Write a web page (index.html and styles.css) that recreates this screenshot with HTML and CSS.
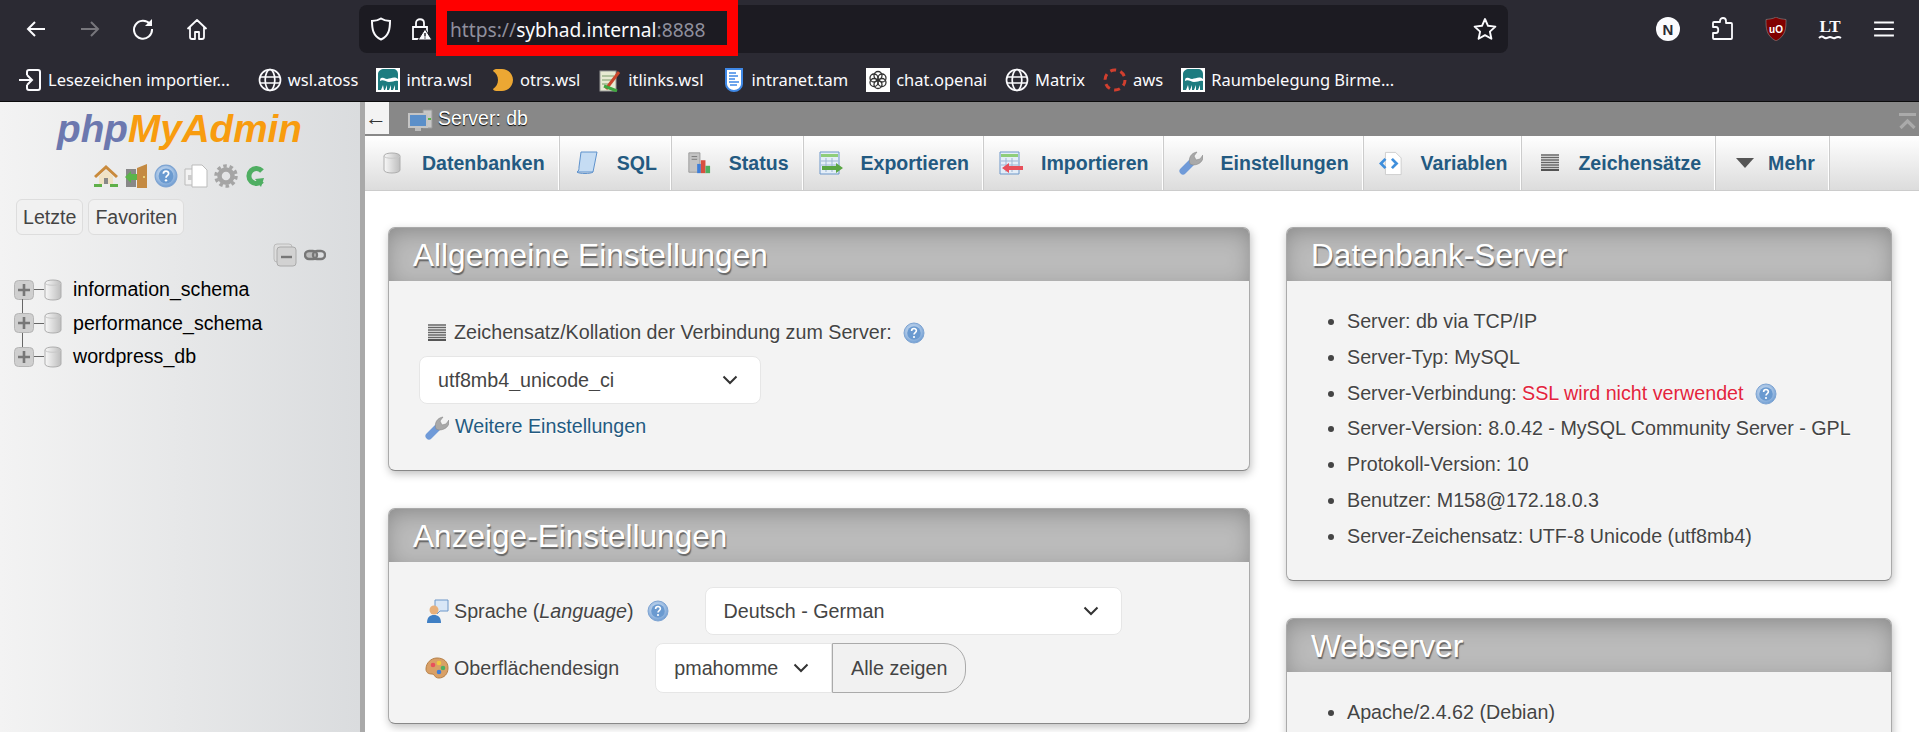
FILE: index.html
```html
<!DOCTYPE html>
<html lang="de">
<head>
    <meta charset="UTF-8">
    <title>sybhad.internal:8888 / db | phpMyAdmin</title>
    <link rel="stylesheet" href="styles.css">
</head>
<body>
<svg class="defs" width="0" height="0">
    <defs>
        <linearGradient id="g-db" x1="0" x2="1" y1="0" y2="0"><stop offset="0" stop-color="#f8f8f8"/><stop offset="1" stop-color="#bdbdbd"/></linearGradient>
        <radialGradient id="g-help" cx=".45" cy=".4" r=".6"><stop offset="0" stop-color="#d5e3f3"/><stop offset=".6" stop-color="#a5c2e4"/><stop offset="1" stop-color="#6f9dd2"/></radialGradient>
        <symbol id="i-db" viewBox="0 0 18 24">
            <path d="M1 5c0-4 16-4 16 0v14c0 4-16 4-16 0z" fill="url(#g-db)" stroke="#aeaeae"/>
            <path d="M1 5c0 3 16 3 16 0" fill="none" stroke="#c8c8c8"/>
        </symbol>
        <symbol id="i-help" viewBox="0 0 22 22">
            <circle cx="11" cy="11" r="10" fill="url(#g-help)" stroke="#7ea4d2"/>
            <circle cx="11" cy="11" r="6.800" fill="#6a9ad0"/>
            <path d="M8.600 9c0-3.200 4.800-3.200 4.800-.2 0 2-2.400 1.800-2.400 3.800" fill="none" stroke="#fff" stroke-width="1.600"/>
            <circle cx="11" cy="15" r="1.100" fill="#fff"/>
        </symbol>
        <symbol id="i-wrench" viewBox="0 0 24 24">
            <path d="M4 20 13 11" stroke="#6f9ad8" stroke-width="7" stroke-linecap="round"/>
            <path d="M11 13C9 7 12 2 18 1l-3 4 2 4 4-1 3-4c1 6-4 10-10 10z" fill="#a9a9a9" stroke="#8c8c8c" stroke-width=".6"/>
        </symbol>
        <symbol id="i-charset" viewBox="0 0 18 18">
            <path d="M0 1h18M0 3.500h18M0 6h18M0 8.500h18M0 11h18M0 13.500h18" stroke="#666" stroke-width="1.300"/>
            <path d="M0 16h18" stroke="#222" stroke-width="1.500"/>
        </symbol>
        <symbol id="i-plus" viewBox="0 0 20 20">
            <rect x=".5" y=".5" width="19" height="19" rx="4" fill="#cfcfcf" stroke="#b5b5b5"/>
            <path d="M4 10h12M10 4v12" stroke="#777" stroke-width="2.600"/>
        </symbol>
        <symbol id="i-globe" viewBox="0 0 24 24">
            <g fill="none" stroke="#fbfbfe" stroke-width="1.700">
                <circle cx="12" cy="12" r="10.500"/>
                <ellipse cx="12" cy="12" rx="4.800" ry="10.500"/>
                <path d="M2 9h20M2 15h20"/>
            </g>
        </symbol>
        <symbol id="i-fav-wave" viewBox="0 0 24 24">
            <rect width="24" height="24" fill="#fff"/>
            <path d="M2 22V6c0-3 3-5 6-5h9c3 0 5 2 5 5v5c-5-4-9 2-14-1-3-1-4 0-4 3 3-2 6 1 9 1 4 0 6-2 9-1v9h-3v-5l-2 5h-2v-5l-2 5h-2v-5l-2 5H8l-1-5-2 5z" fill="#1e7c80"/>
        </symbol>
    </defs>
</svg>

<header class="browser">
    <div class="toolbar">
        <div class="nav-buttons">
            <span class="tool"><svg viewBox="0 0 22 22" class="ico"><path d="M20 11H3M10 4l-7 7 7 7" fill="none" stroke="#fbfbfe" stroke-width="2"/></svg></span>
            <span class="tool"><svg viewBox="0 0 22 22" class="ico"><path d="M2 11h17M12 4l7 7-7 7" fill="none" stroke="#77767c" stroke-width="2"/></svg></span>
            <span class="tool"><svg viewBox="0 0 22 22" class="ico"><path d="M18 6a9 9 0 1 0 2 5" fill="none" stroke="#fbfbfe" stroke-width="2"/><path d="M20 1v7h-7z" fill="#fbfbfe"/></svg></span>
            <span class="tool"><svg viewBox="0 0 22 22" class="ico"><path d="M1.500 11 11 2l9.500 9M4 9v10c0 1 .5 2 2 2h3v-7h4v7h3c1.500 0 2-1 2-2V9" fill="none" stroke="#fbfbfe" stroke-width="1.800" stroke-linejoin="round"/></svg></span>
        </div>
        <div class="urlbar">
            <svg viewBox="0 0 22 24" class="ico-tall"><path d="M11 1.500c3 2 6 2.500 9 2.500 0 8-1 15-9 18.500C3 19 2 12 2 4c3 0 6-.5 9-2.500z" fill="none" stroke="#fbfbfe" stroke-width="2"/></svg>
            <svg viewBox="0 0 22 24" class="ico-tall"><path d="M6 10V6c0-5 8-5 8 0v4M3 10h14v12H3z" fill="none" stroke="#fbfbfe" stroke-width="1.800"/><path d="M15 12l7 11H8z" fill="#fbfbfe" stroke="#1c1b22"/><path d="M15 16v3.500M15 20.500v1" stroke="#1c1b22" stroke-width="1.400"/></svg>
            <span class="url"><span class="url-dim">https://</span>sybhad.internal<span class="url-dim">:8888</span></span>
            <svg viewBox="0 0 24 24" class="ico star"><path d="m12 2 3 6.800 7.400.8-5.500 5 1.500 7.200-6.400-3.700-6.400 3.700 1.500-7.200-5.500-5 7.400-.8z" fill="none" stroke="#fbfbfe" stroke-width="1.900" stroke-linejoin="round"/></svg>
        </div>
        <div class="addons">
            <span class="tool"><svg viewBox="0 0 24 24" class="ico-lg"><circle cx="12" cy="12" r="12" fill="#fbfbfe"/><text x="12" y="17.500" text-anchor="middle" class="svg-n">N</text></svg></span>
            <span class="tool"><svg viewBox="0 0 22 24" class="ico-lg"><path d="M9 5V4c0-4 6-4 6 0v2h5c1 0 1 1 1 1v14c0 1-1 1-1 1H3c-1 0-1-1-1-1v-5h3c3 0 3-6 0-6H2V6s0-1 1-1z" fill="none" stroke="#fbfbfe" stroke-width="1.800" stroke-linejoin="round"/></svg></span>
            <span class="tool"><svg viewBox="0 0 22 24" class="ico-lg"><path d="M11 0c3 2 7 2 10 2.500 0 9 0 16-10 21.500C1 18.500 1 11.500 1 2.500 4 2 8 2 11 0z" fill="#800000" stroke="#8c8c8c" stroke-width=".6"/><text x="11" y="15.500" text-anchor="middle" class="svg-ub">uO</text></svg></span>
            <span class="tool"><svg viewBox="0 0 24 24" class="ico-lg"><text x="12" y="15" text-anchor="middle" class="svg-lt">LT</text><path d="M1 21c3-3 4-1 6 0s3-1 5-1 3 2 5 1 3-2 6 0" fill="none" stroke="#fbfbfe" stroke-width="2"/></svg></span>
            <span class="tool"><svg viewBox="0 0 20 16" class="ico"><path d="M1 2h18M1 8h18M1 14h18" stroke="#fbfbfe" stroke-width="1.800"/></svg></span>
        </div>
    </div>
    <div class="bookmarks">
        <span class="bm bm-import"><svg viewBox="0 0 24 24" class="fav"><path d="M9 7V4c0-1 .5-2 2-2h9c1.500 0 2 1 2 2v16c0 1-.5 2-2 2h-9c-1.500 0-2-1-2-2v-3M1 12h13M9 7l5 5-5 5" fill="none" stroke="#fbfbfe" stroke-width="2"/></svg>Lesezeichen importier...</span>
        <span class="bm"><svg class="fav"><use href="#i-globe"/></svg>wsl.atoss</span>
        <span class="bm"><svg class="fav"><use href="#i-fav-wave"/></svg>intra.wsl</span>
        <span class="bm"><svg viewBox="0 0 24 24" class="fav"><path d="M6 1h6c6 0 11 5 11 11s-5 11-11 11H6c-1 0-3-1-3-2 3-2 5-5 5-9S6 5 3 3c0-1 2-2 3-2z" fill="#eca733"/></svg>otrs.wsl</span>
        <span class="bm"><svg viewBox="0 0 24 24" class="fav"><rect x="2" y="3" width="16" height="20" fill="#e7ead2" stroke="#999"/><path d="M4 8h12M4 12h10M4 16h9" stroke="#7a9a6a"/><path d="M8 21 21 4" stroke="#c9462b" stroke-width="3"/><path d="M6 18l13 5" stroke="#3fa53f" stroke-width="3"/></svg>itlinks.wsl</span>
        <span class="bm"><svg viewBox="0 0 24 24" class="fav"><path d="M4 1h16v15c0 4-4 7-8 7s-8-3-8-7z" fill="#fff" stroke="#3f88e6" stroke-width="2"/><path d="M7 5h7M7 8h9M7 11h6M7 14h10M8 17h7" stroke="#3f88e6" stroke-width="1.700"/></svg>intranet.tam</span>
        <span class="bm"><svg viewBox="0 0 24 24" class="fav"><rect width="24" height="24" fill="#fff"/><g fill="none" stroke="#333" stroke-width="1.300"><circle cx="12" cy="7.500" r="4"/><circle cx="16" cy="10" r="4"/><circle cx="16" cy="14.500" r="4"/><circle cx="12" cy="16.500" r="4"/><circle cx="8" cy="14.500" r="4"/><circle cx="8" cy="10" r="4"/></g></svg>chat.openai</span>
        <span class="bm"><svg class="fav"><use href="#i-globe"/></svg>Matrix</span>
        <span class="bm"><svg viewBox="0 0 24 24" class="fav"><circle cx="12" cy="12" r="10" fill="none" stroke="#d13f2f" stroke-width="3" stroke-dasharray="6 4.500"/></svg>aws</span>
        <span class="bm"><svg class="fav"><use href="#i-fav-wave"/></svg>Raumbelegung Birme...</span>
    </div>
    <div class="redmark"></div>
</header>

<div class="page">
    <aside class="navi">
        <div class="logo"><span class="logo-php">php</span><span class="logo-my">MyAdmin</span></div>
        <div class="navi-icons">
            <svg viewBox="0 0 24 24" class="navi-ico"><path d="M12 1 0 12l2 2 10-9 10 9 2-2z" fill="#c98a3c"/><path d="M5 12l7-6 7 6v8H5z" fill="#f0e2c4"/><path d="M10 14h4v6h-4z" fill="#888"/><path d="M0 20h8v3H0zM16 20h8v3h-8z" fill="#5fb04a"/></svg>
            <svg viewBox="0 0 24 24" class="navi-ico"><path d="M2 5h10v18H2z" fill="#888"/><path d="M13 4l10-4v24H13z" fill="#c48a42"/><circle cx="20" cy="13" r="1" fill="#f7e58a"/><path d="M1 13l6-6v3h6v6H7v3z" fill="#5bb44a"/></svg>
            <svg class="navi-ico"><use href="#i-help"/></svg>
            <svg viewBox="0 0 24 24" class="navi-ico"><path d="M1 5h11v16H1z" fill="#f3f3f3" stroke="#bbb"/><path d="M8 1h10l5 5v17H8z" fill="#fff" stroke="#bbb"/><path d="M4 11h4v5H4z" fill="#ccc"/></svg>
            <svg viewBox="0 0 24 24" class="navi-ico"><circle cx="12" cy="12" r="6.500" fill="none" stroke="#a5a5a5" stroke-width="4.500"/><circle cx="12" cy="12" r="10" fill="none" stroke="#a5a5a5" stroke-width="3.500" stroke-dasharray="3.500 2.800"/></svg>
            <svg viewBox="0 0 20 24" class="navi-ico-sm"><path d="M16 7a7.500 7.500 0 1 0 0 10" fill="none" stroke="#4fae62" stroke-width="5"/><path d="M9 15l9-1-3 9z" fill="#4fae62"/></svg>
        </div>
        <div class="navi-tabs">
            <button class="navi-btn">Letzte</button>
            <button class="navi-btn">Favoriten</button>
        </div>
        <div class="tree-tools">
            <svg viewBox="0 0 24 24" class="tree-ico"><rect x="1" y="1" width="18" height="18" rx="3" fill="#ddd" stroke="#bbb"/><rect x="4" y="4" width="19" height="19" rx="3" fill="#d2d2d2" stroke="#aaa"/><path d="M8 14h11" stroke="#777" stroke-width="2.400"/></svg>
            <svg viewBox="0 0 22 12" class="link-ico"><rect x="1" y="2" width="12" height="8" rx="4" fill="#bbb" stroke="#777" stroke-width="2.400"/><rect x="9" y="2" width="12" height="8" rx="4" fill="none" stroke="#777" stroke-width="2.400"/></svg>
        </div>
        <ul class="tree">
            <li class="tree-row"><svg class="tree-plus"><use href="#i-plus"/></svg><span class="tree-line"></span><svg class="tree-db"><use href="#i-db"/></svg>information_schema</li>
            <li class="tree-row"><svg class="tree-plus"><use href="#i-plus"/></svg><span class="tree-line"></span><svg class="tree-db"><use href="#i-db"/></svg>performance_schema</li>
            <li class="tree-row"><svg class="tree-plus"><use href="#i-plus"/></svg><span class="tree-line"></span><svg class="tree-db"><use href="#i-db"/></svg>wordpress_db</li>
        </ul>
    </aside>
    <div class="divider"></div>
    <main class="main">
        <div class="topbar">
            <span class="collapse">←</span>
            <svg viewBox="0 0 26 24" class="server-ico"><path d="M15 1h9v18h-9z" fill="#c7c7c7" stroke="#999"/><path d="M1 5h18v13H1z" fill="#5b8fc9" stroke="#c4c4c4" stroke-width="2"/><path d="M7 19h6v3H7z" fill="#bbb"/><path d="M20 10h3" stroke="#5bb44a" stroke-width="2"/></svg>
            <span class="server-name">Server: db</span>
            <svg viewBox="0 0 17 16" class="to-top"><path d="M0 1.500h17" stroke="#aaa" stroke-width="3"/><path d="M1.500 15 8.500 8l7 7" fill="none" stroke="#aaa" stroke-width="3.200"/></svg>
        </div>
        <nav class="tabs">
            <a class="tab tab-first"><span class="tab-ico"><svg class="db-big"><use href="#i-db"/></svg></span>Datenbanken</a>
            <a class="tab"><span class="tab-ico"><svg viewBox="0 0 24 24" width="24" height="24"><path d="M6 1h16l-4 20H2c2-1 2-3 2-5z" fill="#c5dcf3" stroke="#5f92cc"/><path d="M2 21c2 2 14 2 16 0" fill="none" stroke="#5f92cc"/></svg></span>SQL</a>
            <a class="tab"><span class="tab-ico"><svg viewBox="0 0 26 24" width="26" height="24"><path d="M2 1h12v21H2z" fill="#c4c4c4" stroke="#999"/><path d="M5 5h6M5 8h6" stroke="#777"/><path d="M11 13h4v10h-4z" fill="#3f7fd8"/><path d="M15 9h5v14h-5z" fill="#d8503f"/><path d="M20 15h5v8h-5z" fill="#4fae62"/></svg></span>Status</a>
            <a class="tab"><span class="tab-ico"><svg viewBox="0 0 24 24" width="24" height="24"><path d="M1 1h19v22H1z" fill="#e4eef8" stroke="#6d97c9"/><path d="M2 3h17v3H2z" fill="#8fce7b"/><path d="M2 10h17M2 14h17M7 7v14M13 7v14" stroke="#9db7d4"/><path d="M3 15h14v-3l7 5-7 5v-3H3z" fill="#5aa644"/></svg></span>Exportieren</a>
            <a class="tab"><span class="tab-ico"><svg viewBox="0 0 24 24" width="24" height="24"><path d="M1 1h19v22H1z" fill="#e4eef8" stroke="#6d97c9"/><path d="M2 3h17v3H2z" fill="#8fce7b"/><path d="M2 10h17M2 14h17M7 7v14M13 7v14" stroke="#9db7d4"/><path d="M24 15H10v-3l-7 5 7 5v-3h14z" fill="#e8505b"/></svg></span>Importieren</a>
            <a class="tab"><span class="tab-ico"><svg width="24" height="24"><use href="#i-wrench"/></svg></span>Einstellungen</a>
            <a class="tab"><span class="tab-ico"><svg viewBox="0 0 26 26" width="25" height="25"><path d="M7 1h11l6 6v18H7z" fill="#fff" stroke="#ccc"/><path d="M7 8 2 13l5 5M14 8l5 5-5 5" fill="none" stroke="#3f8fdc" stroke-width="3"/></svg></span>Variablen</a>
            <a class="tab tab-charset"><span class="tab-ico"><svg class="charset-ico"><use href="#i-charset"/></svg></span>Zeichensätze</a>
            <a class="tab tab-more"><span class="tab-ico"><svg viewBox="0 0 18 12" width="18" height="12"><path d="M0 1h18L9 11z" fill="#555"/></svg></span>Mehr</a>
        </nav>
        <div class="content">
            <div class="col">
                <section class="panel">
                    <h2 class="panel-head">Allgemeine Einstellungen</h2>
                    <div class="panel-body body-general">
                        <div class="field-label">
                            <svg class="charset-ico"><use href="#i-charset"/></svg>
                            <span>Zeichensatz/Kollation der Verbindung zum Server:</span>
                            <svg class="help-ico"><use href="#i-help"/></svg>
                        </div>
                        <select class="sel sel-coll"><option>utf8mb4_unicode_ci</option></select>
                        <a class="more-link"><svg class="wrench-ico"><use href="#i-wrench"/></svg>Weitere Einstellungen</a>
                    </div>
                </section>
                <section class="panel">
                    <h2 class="panel-head">Anzeige-Einstellungen</h2>
                    <div class="panel-body body-display">
                        <div class="form-row">
                            <svg viewBox="0 0 24 24" class="row-ico"><path d="M10 1h13v11H15l-3 3v-3h-2z" fill="#d9e7f7" stroke="#6d97c9"/><circle cx="9" cy="11" r="4.500" fill="#e8b07a"/><path d="M2 24c0-6 3-8 7-8s7 2 7 8z" fill="#3f7fc4"/></svg>
                            <span>Sprache (<em>Language</em>)</span>
                            <svg class="help-ico help-lang"><use href="#i-help"/></svg>
                            <select class="sel sel-lang"><option>Deutsch - German</option></select>
                        </div>
                        <div class="form-row">
                            <svg viewBox="0 0 24 24" class="row-ico"><path d="M12 2c7 0 11 4 11 10s-4 10-9 10-4-4-7-4-6-1-6-5C1 7 6 2 12 2z" fill="#d9a066" stroke="#b57f46"/><circle cx="8" cy="9" r="2.300" fill="#e8505b"/><circle cx="14" cy="7" r="2.300" fill="#f0c93f"/><circle cx="18" cy="12" r="2.300" fill="#4fae62"/><circle cx="14" cy="16" r="2.300" fill="#3f7fd8"/></svg>
                            <span>Oberflächendesign</span>
                            <div class="theme-group">
                                <select class="sel sel-theme"><option>pmahomme</option></select>
                                <button class="show-all">Alle zeigen</button>
                            </div>
                        </div>
                    </div>
                </section>
            </div>
            <div class="col">
                <section class="panel">
                    <h2 class="panel-head">Datenbank-Server</h2>
                    <ul class="panel-list">
                        <li>Server: db via TCP/IP</li>
                        <li>Server-Typ: MySQL</li>
                        <li>Server-Verbindung: <span class="warn">SSL wird nicht verwendet</span> <svg class="help-ico help-ssl"><use href="#i-help"/></svg></li>
                        <li>Server-Version: 8.0.42 - MySQL Community Server - GPL</li>
                        <li>Protokoll-Version: 10</li>
                        <li>Benutzer: M158@172.18.0.3</li>
                        <li>Server-Zeichensatz: UTF-8 Unicode (utf8mb4)</li>
                    </ul>
                </section>
                <section class="panel">
                    <h2 class="panel-head">Webserver</h2>
                    <ul class="panel-list">
                        <li>Apache/2.4.62 (Debian)</li>
                    </ul>
                </section>
            </div>
        </div>
    </main>
</div>
</body>
</html>
```

FILE: styles.css
```css
* {
    box-sizing: border-box;
}
html, body {
    margin: 0;
    height: 100%;
    overflow: hidden;
}
body {
    font-family: "Liberation Sans", Arial, sans-serif;
    font-size: 19.7px;
    color: #444;
    background: #fff;
}
.defs {
    position: absolute;
}

/* browser chrome */
.browser {
    position: relative;
    height: 102px;
    background: #2b2a33;
    border-bottom: 1px solid #0c0c0d;
    font-family: "Noto Sans", sans-serif;
    color: #fbfbfe;
}
.toolbar {
    display: flex;
    align-items: center;
    height: 58px;
    padding-left: 9px;
}
.nav-buttons {
    display: flex;
    width: 215px;
}
.tool {
    display: flex;
    align-items: center;
    justify-content: center;
    width: 54px;
}
.ico {
    width: 22px;
    height: 22px;
}
.ico-tall {
    width: 22px;
    height: 24px;
}
.ico-lg {
    width: 24px;
    height: 24px;
}
.urlbar {
    display: flex;
    align-items: center;
    gap: 18px;
    width: 1149px;
    height: 48px;
    margin-left: 135px;
    padding: 0 11px;
    background: #1c1b22;
    border-radius: 8px;
}
.url {
    font-size: 19.2px;
    white-space: nowrap;
}
.url-dim {
    color: #8f8f9d;
}
.star {
    width: 24px;
    height: 24px;
    margin-left: auto;
}
.svg-n {
    font: bold 15px "Liberation Sans", sans-serif;
    fill: #2b2a33;
}
.svg-ub {
    font: bold 10px "Liberation Sans", sans-serif;
    fill: #fff;
}
.svg-lt {
    font: bold 17px "Liberation Serif", serif;
    fill: #fbfbfe;
}
.addons {
    display: flex;
    margin-left: 133px;
}
.bookmarks {
    display: flex;
    align-items: center;
    gap: 18px;
    height: 43px;
    padding: 0 0 0 18px;
    font-size: 16.5px;
    white-space: nowrap;
}
.bm {
    display: flex;
    align-items: center;
    gap: 6px;
}
.bm-import {
    margin-right: 10px;
}
.fav {
    width: 24px;
    height: 24px;
}
.redmark {
    position: absolute;
    left: 436px;
    top: 0;
    width: 302px;
    height: 56px;
    border: 11px solid #f00;
}

/* layout */
.page {
    display: flex;
    height: 630px;
}
.navi {
    width: 360px;
    flex: none;
    padding: 7px 0 0 14px;
    font-size: 19.6px;
    background: linear-gradient(to right, #f3f3f3, #dadcde);
}
.divider {
    width: 5px;
    flex: none;
    background: #a9a9a9;
}
.main {
    flex: 1;
    min-width: 0;
}

/* navigation panel */
.logo {
    height: 42px;
    padding-left: 43px;
    font-size: 38.7px;
    line-height: 40px;
    font-weight: bold;
    font-style: italic;
}
.logo-php {
    color: #6c78af;
}
.logo-my {
    color: #f89c0e;
}
.navi-icons {
    display: flex;
    align-items: center;
    gap: 6px;
    height: 24px;
    margin-top: 13px;
    padding-left: 80px;
}
.navi-ico {
    width: 24px;
    height: 24px;
}
.navi-ico-sm {
    width: 20px;
    height: 24px;
    margin-left: 2px;
}
.navi-tabs {
    display: flex;
    gap: 5px;
    margin: 11px 0 0 2px;
}
.navi-btn {
    height: 36px;
    padding: 0 6px;
    font: inherit;
    color: #444;
    background: #f1f1f1;
    border: 1px solid #ddd;
    border-radius: 6px;
}
.tree-tools {
    display: flex;
    align-items: center;
    gap: 7px;
    height: 24px;
    margin: 8px 0 0 259px;
}
.tree-ico {
    width: 24px;
    height: 24px;
}
.link-ico {
    width: 22px;
    height: 12px;
}
.tree {
    margin: 6px 0 0;
    padding: 0;
    list-style: none;
    color: #000;
}
.tree-row {
    position: relative;
    display: flex;
    align-items: center;
    height: 33.500px;
}
.tree-row:not(:last-child)::after {
    content: "";
    position: absolute;
    left: 8px;
    top: 26px;
    height: 15px;
    border-left: 1px solid #666;
}
.tree-plus {
    width: 20px;
    height: 20px;
}
.tree-line {
    width: 10px;
    border-top: 1px solid #666;
}
.tree-db {
    width: 18px;
    height: 24px;
    margin-right: 11px;
}

/* top of the main area */
.topbar {
    display: flex;
    align-items: flex-start;
    height: 34px;
    background: #888;
    color: #fff;
}
.collapse {
    width: 24px;
    height: 32px;
    color: #333;
    background: #f3f3f3;
    font-size: 22px;
    line-height: 32px;
}
.server-ico {
    width: 26px;
    height: 24px;
    margin: 7px 4px 0 19px;
}
.server-name {
    font-size: 19.5px;
    line-height: 33px;
    text-shadow: 0 1px 1px #000;
}
.to-top {
    width: 17px;
    height: 16px;
    margin: 11px 3px 0 auto;
}
.tabs {
    display: flex;
    height: 55px;
    font-size: 19.55px;
    background: linear-gradient(#fff, #dcdcdc);
    border-bottom: 1px solid #ccc;
}
.tab {
    display: flex;
    align-items: center;
    gap: 18px;
    padding: 0 13px 0 16px;
    font-weight: bold;
    color: #235a81;
    border-right: 1px solid #fff;
    box-shadow: 1px 0 0 #ccc;
}
.tab-ico {
    display: flex;
    align-items: center;
    justify-content: center;
    width: 24px;
}
.tab-first {
    padding-left: 15px;
}
.tab-charset {
    gap: 19px;
    padding-left: 20px;
}
.tab-more {
    gap: 14px;
    padding-left: 21px;
}
.tab-charset .tab-ico, .tab-more .tab-ico {
    width: 18px;
}
.db-big {
    width: 18px;
    height: 24px;
}

/* panels */
.content {
    display: grid;
    grid-template-columns: 862px 606px;
    gap: 36px;
    padding: 36px 0 0 23px;
}
.panel {
    margin-bottom: 37px;
    background: #f3f3f3;
    border: 1px solid #aaa;
    border-bottom-color: #888;
    border-radius: 7px;
    box-shadow: 1px 3px 8px rgba(0, 0, 0, .25);
    text-shadow: 0 1px 0 #fff;
    overflow: hidden;
}
.panel-head {
    height: 53px;
    margin: 0;
    padding-left: 24px;
    font-size: 31.6px;
    font-weight: normal;
    line-height: 54px;
    color: #fff;
    background: #bbb;
    box-shadow: inset 0 6px 24px -4px rgba(0, 0, 0, .3);
    text-shadow: 1px 2px 1px #666;
}
.panel-body {
    padding-left: 30px;
}
.body-general {
    padding-top: 39px;
    padding-bottom: 32px;
}
.body-display {
    padding-top: 25px;
    padding-bottom: 30px;
}
.field-label {
    display: flex;
    align-items: center;
    height: 25px;
    margin-left: 9px;
}
.field-label .charset-ico {
    margin-right: 8px;
}
.charset-ico {
    width: 18px;
    height: 18px;
}
.help-ico {
    width: 22px;
    height: 22px;
    margin-left: 11px;
}
.help-lang {
    margin-left: 13px;
}
.help-ssl {
    margin-left: 6px;
    vertical-align: -5px;
}
.sel {
    display: block;
    height: 48px;
    padding: 0 18px;
    font: inherit;
    color: #444;
    text-shadow: none;
    background: #fff url("data:image/svg+xml,%3Csvg xmlns='http://www.w3.org/2000/svg' width='16' height='10'%3E%3Cpath d='M1.500 1.500 8 8l6.500-6.500' fill='none' stroke='%23333' stroke-width='2'/%3E%3C/svg%3E") no-repeat right 22px center;
    border: 1px solid #e6e6e6;
    border-radius: 8px;
    appearance: none;
}
.sel-coll {
    width: 342px;
    margin-top: 11px;
}
.more-link {
    display: flex;
    align-items: center;
    gap: 6px;
    height: 24px;
    margin: 10px 0 0 6px;
    color: #235a81;
}
.wrench-ico {
    width: 24px;
    height: 24px;
    margin-top: 4px;
}
.form-row {
    display: flex;
    align-items: center;
    margin-left: 6px;
}
.form-row + .form-row {
    margin-top: 8px;
}
.row-ico {
    width: 24px;
    height: 24px;
    margin-right: 5px;
}
.sel-lang {
    width: 417px;
    margin-left: 36px;
}
.theme-group {
    display: flex;
    margin-left: 36px;
}
.sel-theme {
    width: 177px;
    height: 50px;
    border-radius: 8px 0 0 8px;
}
.show-all {
    width: 134px;
    height: 50px;
    padding: 0;
    font: inherit;
    color: #444;
    background: #f1f1f1;
    border: 1px solid #aaa;
    border-radius: 0 22px 22px 0;
}
.panel-list {
    margin: 0;
    padding: 23px 0 25px 60px;
}
.panel-list li {
    height: 35.800px;
    line-height: 35.800px;
}
.warn {
    color: #e3243c;
}
```
